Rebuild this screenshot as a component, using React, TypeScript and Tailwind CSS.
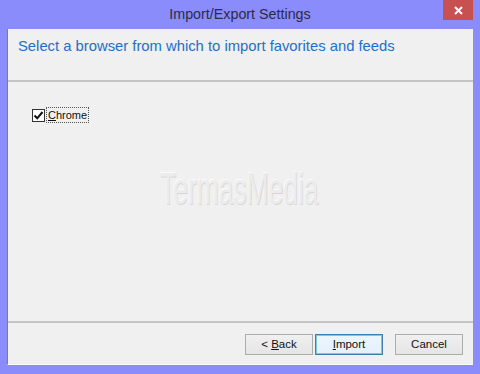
import React, { useState } from "react";

const font = { fontFamily: '"Liberation Sans", Arial, sans-serif' };

const App: React.FC = () => {
  const [checked, setChecked] = useState(true);

  return (
    <div
      className="w-[480px] h-[374px] bg-[#8a8cfb] flex flex-col overflow-hidden select-none"
      style={font}
    >
      {/* title bar */}
      <div className="relative h-[29px] flex items-center justify-center shrink-0">
        <span className="text-[14.3px] text-[#2b2b44] pt-[1px]">Import/Export Settings</span>
        <button className="absolute right-[7px] top-0 w-[30px] h-[20px] bg-[#c75050] flex items-center justify-center">
          <svg width="9" height="9" viewBox="0 0 9 9">
            <path d="M1 1L8 8M8 1L1 8" stroke="#fff" strokeWidth="2" />
          </svg>
        </button>
      </div>

      {/* client area */}
      <div className="mx-[7px] mb-[9px] flex-1 flex flex-col bg-[#f0f0f0] border-l border-[#6f71e6] border-b border-b-[#fbfbfb] relative">
        <div className="h-[53px] px-[10px] pt-[5px] border-b-2 border-[#c4c4c4]">
          <h1 className="text-[14.8px] text-[#1a6fd0] leading-[24px]">
            Select a browser from which to import favorites and feeds
          </h1>
        </div>

        <div className="flex-1 pt-[25px] pl-[24px]">
          <label className="flex items-center gap-[1px] w-fit">
            <span
              onClick={() => setChecked(!checked)}
              className="w-[13px] h-[13px] border border-[#333] bg-white flex items-center justify-center"
            >
              {checked && (
                <svg width="11" height="11" viewBox="0 0 11 11">
                  <path d="M1.5 5.5L4.2 8.3L9.5 2" stroke="#111" strokeWidth="2" fill="none" />
                </svg>
              )}
            </span>
            <span className="text-[11px] text-[#111] leading-[14px] px-[1px] border border-dotted border-[#555]">
              <span className="underline">C</span>hrome
            </span>
          </label>
        </div>

        {/* watermark */}
        <div
          className="absolute left-[152px] top-[138px] text-[44px] leading-none text-[#ececec] origin-left scale-x-[0.6]"
          style={{
            fontFamily: '"Liberation Sans Narrow", "Liberation Sans", sans-serif',
            textShadow: "1px 1px 0 #d6d6d6, -1px -1px 0 #fafafa",
          }}
        >
          TermasMedia
        </div>

        <div className="h-[43px] border-t-2 border-[#c4c4c4] flex items-start justify-end pt-[11px] pr-[10px] text-[11.5px] text-[#111]">
          <button className="w-[68px] h-[21px] border border-[#acacac] bg-gradient-to-b from-[#f0f0f0] to-[#e5e5e5]">
            &lt; <span className="underline">B</span>ack
          </button>
          <button className="ml-[2px] w-[68px] h-[21px] border border-[#3c7fb1] bg-gradient-to-b from-[#eaf5fc] to-[#e5f1fb] shadow-[inset_0_0_0_1px_#7ec4ea]">
            <span className="underline">I</span>mport
          </button>
          <button className="ml-[12px] w-[68px] h-[21px] border border-[#acacac] bg-gradient-to-b from-[#f0f0f0] to-[#e5e5e5]">
            Cancel
          </button>
        </div>
      </div>
    </div>
  );
};

export default App;
